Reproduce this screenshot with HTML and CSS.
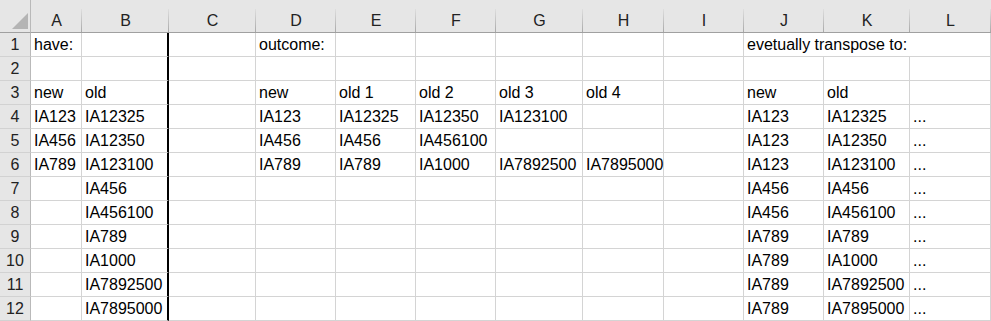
FILE: index.html
```html
<!DOCTYPE html>
<html>
<head>
    <title>Sheet1</title>
    <link rel="stylesheet" href="styles.css">
</head>
<body>
    <div class="sheet">
        <!-- column headers -->
        <div class="corner"><div class="corner-tri"></div></div>
        <div class="strip"></div>
        <div class="ch">A</div><div class="ch">B</div><div class="ch">C</div><div class="ch">D</div>
        <div class="ch">E</div><div class="ch">F</div><div class="ch">G</div><div class="ch">H</div>
        <div class="ch">I</div><div class="ch">J</div><div class="ch">K</div><div class="ch">L</div>

        <!-- row 1 -->
        <div class="rh">1</div>
        <div class="c">have:</div><div class="c b"></div><div class="c"></div>
        <div class="c">outcome:</div><div class="c"></div><div class="c"></div><div class="c"></div><div class="c"></div>
        <div class="c"></div>
        <div class="c wide">evetually transpose to:</div>

        <!-- row 2 -->
        <div class="rh">2</div>
        <div class="c"></div><div class="c b"></div><div class="c"></div>
        <div class="c"></div><div class="c"></div><div class="c"></div><div class="c"></div><div class="c"></div>
        <div class="c"></div>
        <div class="c"></div><div class="c"></div><div class="c"></div>

        <!-- row 3 -->
        <div class="rh">3</div>
        <div class="c">new</div><div class="c b">old</div><div class="c"></div>
        <div class="c">new</div><div class="c">old 1</div><div class="c">old 2</div><div class="c">old 3</div><div class="c">old 4</div>
        <div class="c"></div>
        <div class="c">new</div><div class="c">old</div><div class="c"></div>

        <!-- row 4 -->
        <div class="rh">4</div>
        <div class="c">IA123</div><div class="c b">IA12325</div><div class="c"></div>
        <div class="c">IA123</div><div class="c">IA12325</div><div class="c">IA12350</div><div class="c">IA123100</div><div class="c"></div>
        <div class="c"></div>
        <div class="c">IA123</div><div class="c">IA12325</div><div class="c">...</div>

        <!-- row 5 -->
        <div class="rh">5</div>
        <div class="c">IA456</div><div class="c b">IA12350</div><div class="c"></div>
        <div class="c">IA456</div><div class="c">IA456</div><div class="c">IA456100</div><div class="c"></div><div class="c"></div>
        <div class="c"></div>
        <div class="c">IA123</div><div class="c">IA12350</div><div class="c">...</div>

        <!-- row 6 -->
        <div class="rh">6</div>
        <div class="c">IA789</div><div class="c b">IA123100</div><div class="c"></div>
        <div class="c">IA789</div><div class="c">IA789</div><div class="c">IA1000</div><div class="c">IA7892500</div><div class="c">IA7895000</div>
        <div class="c"></div>
        <div class="c">IA123</div><div class="c">IA123100</div><div class="c">...</div>

        <!-- row 7 -->
        <div class="rh">7</div>
        <div class="c"></div><div class="c b">IA456</div><div class="c"></div>
        <div class="c"></div><div class="c"></div><div class="c"></div><div class="c"></div><div class="c"></div>
        <div class="c"></div>
        <div class="c">IA456</div><div class="c">IA456</div><div class="c">...</div>

        <!-- row 8 -->
        <div class="rh">8</div>
        <div class="c"></div><div class="c b">IA456100</div><div class="c"></div>
        <div class="c"></div><div class="c"></div><div class="c"></div><div class="c"></div><div class="c"></div>
        <div class="c"></div>
        <div class="c">IA456</div><div class="c">IA456100</div><div class="c">...</div>

        <!-- row 9 -->
        <div class="rh">9</div>
        <div class="c"></div><div class="c b">IA789</div><div class="c"></div>
        <div class="c"></div><div class="c"></div><div class="c"></div><div class="c"></div><div class="c"></div>
        <div class="c"></div>
        <div class="c">IA789</div><div class="c">IA789</div><div class="c">...</div>

        <!-- row 10 -->
        <div class="rh">10</div>
        <div class="c"></div><div class="c b">IA1000</div><div class="c"></div>
        <div class="c"></div><div class="c"></div><div class="c"></div><div class="c"></div><div class="c"></div>
        <div class="c"></div>
        <div class="c">IA789</div><div class="c">IA1000</div><div class="c">...</div>

        <!-- row 11 -->
        <div class="rh">11</div>
        <div class="c"></div><div class="c b">IA7892500</div><div class="c"></div>
        <div class="c"></div><div class="c"></div><div class="c"></div><div class="c"></div><div class="c"></div>
        <div class="c"></div>
        <div class="c">IA789</div><div class="c">IA7892500</div><div class="c">...</div>

        <!-- row 12 -->
        <div class="rh">12</div>
        <div class="c"></div><div class="c b">IA7895000</div><div class="c"></div>
        <div class="c"></div><div class="c"></div><div class="c"></div><div class="c"></div><div class="c"></div>
        <div class="c"></div>
        <div class="c">IA789</div><div class="c">IA7895000</div><div class="c">...</div>
    </div>
</body>
</html>
```

FILE: styles.css
```css
body {
    margin: 0;
    background-color: #ffffff;
    color: #000000;
    font-family: "Liberation Sans", Arial, sans-serif;
    font-size: 16px;
}

.sheet {
    display: grid;
    grid-template-columns: 31px 51px 87px 87px 80px 80px 80px 87px 81px 80px 80px 86px 81px;
    grid-template-rows: 9px 24px repeat(12, 24px);
    overflow: hidden;
}

.sheet > div {
    box-sizing: border-box;
    white-space: nowrap;
}

.corner {
    grid-row: span 2;
    background-color: #e6e6e6;
    border-right: 1px solid #b9b9b9;
    border-bottom: 1px solid #a0a0a0;
    display: flex;
    justify-content: flex-end;
    align-items: flex-end;
    padding: 0 2px 3px 0;
}

.corner-tri {
    width: 16px;
    height: 16px;
    background-color: #b4b4b4;
    clip-path: polygon(100% 0, 100% 100%, 0 100%);
}

.strip {
    grid-column: 2 / -1;
    background-color: #e6e6e6;
}

.ch {
    background: linear-gradient(#dedede, #a9a9a9) right top / 1px 100% no-repeat, #e6e6e6;
    border-bottom: 1px solid #a0a0a0;
    color: #222222;
    text-align: center;
    line-height: 22px;
    padding-top: 1px;
}

.rh {
    background-color: #e6e6e6;
    border-right: 1px solid #b9b9b9;
    border-bottom: 1px solid #d2d2d2;
    color: #222222;
    text-align: center;
    line-height: 23px;
}

.c {
    border-right: 1px solid #d4d4d4;
    border-bottom: 1px solid #d4d4d4;
    padding-left: 3px;
    line-height: 23px;
}

.c.b {
    border-right: 2px solid #000000;
}

.c.wide {
    grid-column: span 3;
}
```
